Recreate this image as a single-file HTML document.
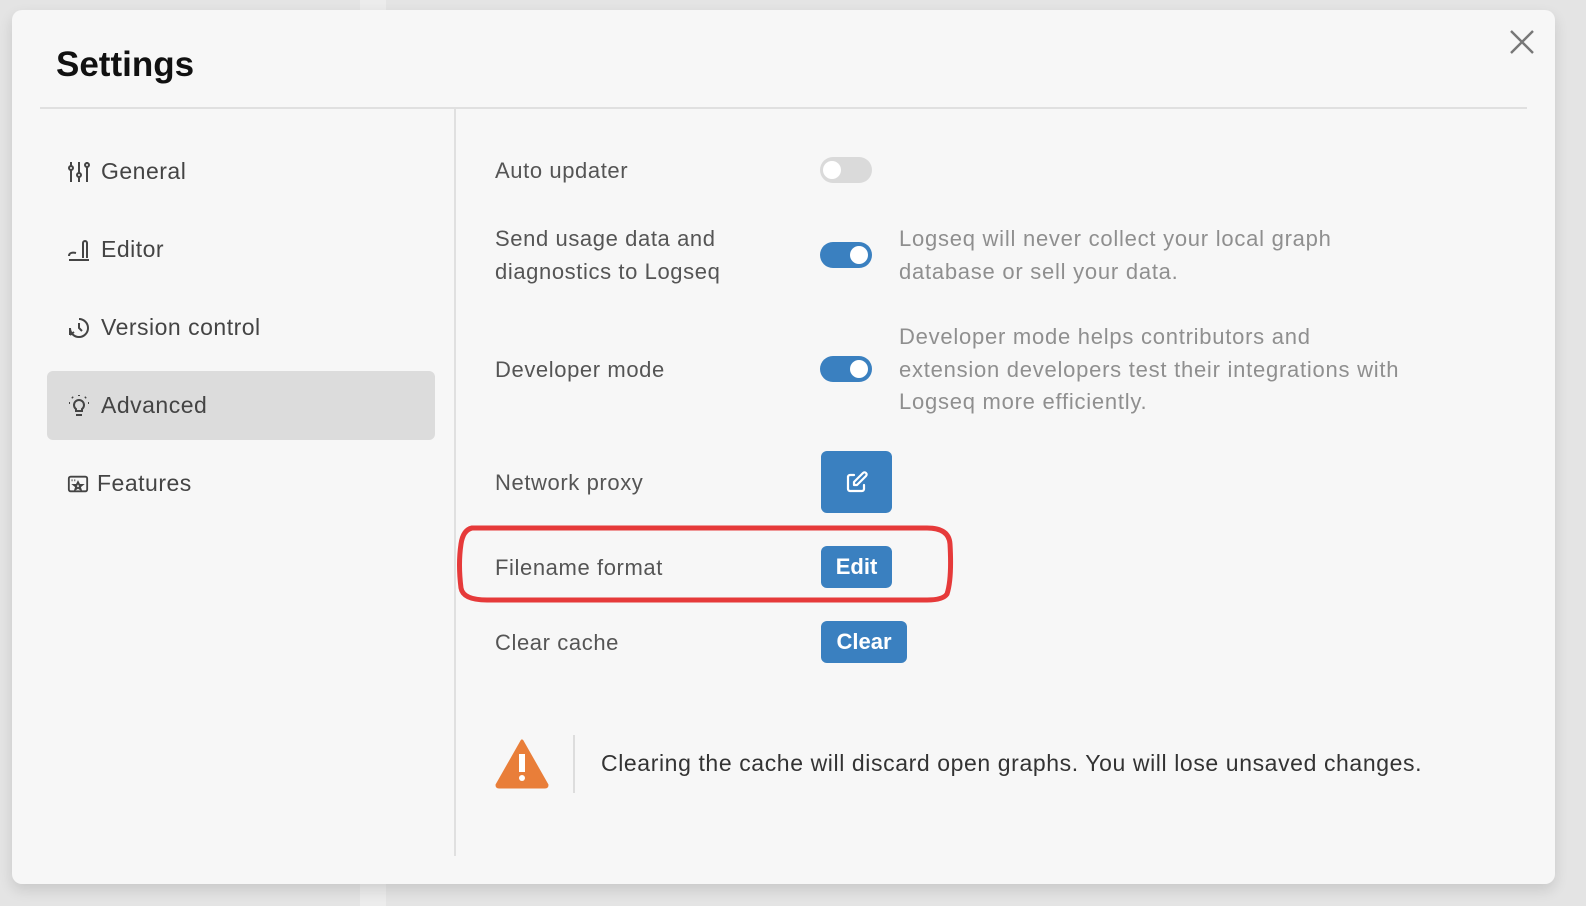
<!DOCTYPE html>
<html><head><style>
body{margin:0;width:1586px;height:906px;background:#e4e4e4;font-family:"Liberation Sans",sans-serif;position:relative;overflow:hidden}
.bgcol{position:absolute;left:360px;top:0;width:26px;height:906px;background:#ececec}
.modal{position:absolute;left:12px;top:10px;width:1543px;height:874px;background:#f7f7f7;border-radius:10px;box-shadow:0 6px 14px rgba(0,0,0,.12)}
.t{position:absolute;white-space:nowrap}
h1{position:absolute;left:44px;top:35px;margin:0;font-size:35px;font-weight:bold;color:#111}
.hl{position:absolute;left:28px;top:97px;width:1487px;height:2px;background:#e0e0e0}
.vl{position:absolute;left:442px;top:98px;width:2px;height:748px;background:#e0e0e0}
.nav{position:absolute;left:55px;font-size:23px;letter-spacing:.5px;color:#444;display:flex;align-items:center;gap:10px}
.sel{position:absolute;left:35px;top:361px;width:388px;height:69px;background:#dcdcdc;border-radius:6px}
.lab{position:absolute;left:483px;font-size:22px;letter-spacing:.6px;color:#555;line-height:33px;white-space:nowrap}
.desc{position:absolute;left:887px;font-size:22px;letter-spacing:.75px;color:#8f8f8f;line-height:32.5px;white-space:nowrap}
.tog{position:absolute;left:808px;width:52px;height:26px;border-radius:13px;background:#3a80c0}
.tog::after{content:"";position:absolute;right:4px;top:4px;width:18px;height:18px;border-radius:50%;background:#fff}
.tog.off{background:#dadada}
.tog.off::after{left:3px;right:auto}
.btn{position:absolute;background:#3a80c0;color:#fff;font-weight:bold;font-size:22px;border-radius:6px;text-align:center}
</style></head><body>
<div class="bgcol"></div>
<div class="modal">
<h1>Settings</h1>
<svg class="t" style="left:1498px;top:20px" width="24" height="24" viewBox="0 0 24 24" stroke="#777" stroke-width="2.4" fill="none"><path d="M1 1L23 23M23 1L1 23"/></svg>
<div class="hl"></div><div class="vl"></div>
<div class="sel"></div>
<div class="nav" style="top:148px"><svg width="24" height="24" viewBox="0 0 24 24" fill="none" stroke="#444" stroke-width="2"><circle cx="4" cy="8" r="2"/><path d="M4 2v4M4 10v12"/><circle cx="12" cy="15" r="2"/><path d="M12 2v11M12 17v5"/><circle cx="20" cy="5" r="2"/><path d="M20 2v1M20 7v15"/></svg>General</div>
<div class="nav" style="top:226px"><svg width="24" height="24" viewBox="0 0 24 24" fill="none" stroke="#444" stroke-width="2"><path d="M2 22h20M2 18c0-3 3-4 7-3M16 20V5a2 2 0 014 0v15"/></svg>Editor</div>
<div class="nav" style="top:304px"><svg width="24" height="24" viewBox="0 0 24 24" fill="none" stroke="#444" stroke-width="2"><path d="M3 12a9 9 0 109-9M3 12v7M3 19l4-3"/><path d="M12 7v5l3 3"/></svg>Version control</div>
<div class="nav" style="top:382px"><svg width="24" height="24" viewBox="0 0 24 24" fill="none" stroke="#444" stroke-width="2"><path d="M12 1v1M2 9h1M21 9h1M5 3l1 1M19 3l-1 1"/><path d="M9 17v-2a5 5 0 116 0v2zM9 21h6"/></svg>Advanced</div>
<div class="nav" style="top:460px;gap:8px"><svg width="22" height="22" viewBox="0 0 24 24" fill="none" stroke="#444" stroke-width="2"><rect x="2" y="4" width="20" height="16" rx="2"/><path d="M12 10l1.5 3h3l-2.5 2 1 3-3-2-3 2 1-3-2.5-2h3z"/><path d="M5 8h1M8 8h1"/></svg>Features</div>

<div class="lab" style="top:144px">Auto updater</div>
<div class="tog off" style="top:147px"></div>
<div class="lab" style="top:212px">Send usage data and<br>diagnostics to Logseq</div>
<div class="tog" style="top:232px"></div>
<div class="desc" style="top:213px">Logseq will never collect your local graph<br>database or sell your data.</div>
<div class="lab" style="top:343px">Developer mode</div>
<div class="tog" style="top:346px"></div>
<div class="desc" style="top:311px">Developer mode helps contributors and<br>extension developers test their integrations with<br>Logseq more efficiently.</div>
<div class="lab" style="top:456px">Network proxy</div>
<div class="btn" style="left:809px;top:441px;width:71px;height:62px"><svg style="margin-top:19px" width="24" height="24" viewBox="0 0 24 24" fill="none" stroke="#fff" stroke-width="2.2" stroke-linecap="round" stroke-linejoin="round"><path d="M9 5H5a2 2 0 00-2 2v12a2 2 0 002 2h12a2 2 0 002-2v-4"/><path d="M9 15h3l9-9a2.1 2.1 0 00-3-3l-9 9z"/></svg></div>
<div class="lab" style="top:541px">Filename format</div>
<div class="btn" style="left:809px;top:536px;width:71px;height:42px;line-height:42px">Edit</div>
<svg class="t" style="left:445px;top:514px" width="500" height="80"><path d="M15 4 H470 Q492 4 493 20 Q495 55 490 70 Q486 76 470 76 H30 Q6 76 4 64 Q1 40 4 20 Q6 6 15 4Z" fill="none" stroke="#e63a3a" stroke-width="5"/></svg>
<div class="lab" style="top:616px">Clear cache</div>
<div class="btn" style="left:809px;top:611px;width:86px;height:42px;line-height:42px">Clear</div>
<svg class="t" style="left:483px;top:729px" width="54" height="50" viewBox="0 0 54 50"><path d="M27 2L52 46Q52 48 50 48H4Q2 48 2 46Z" fill="#e97e39" stroke="#e97e39" stroke-width="3" stroke-linejoin="round"/><rect x="24" y="15" width="6" height="18" fill="#fff"/><circle cx="27" cy="39" r="3" fill="#fff"/></svg>
<div class="t" style="left:561px;top:725px;width:2px;height:58px;background:#ddd"></div>
<div class="t" style="left:589px;top:740px;font-size:23px;letter-spacing:.6px;color:#333">Clearing the cache will discard open graphs. You will lose unsaved changes.</div>
</div>
</body></html>
